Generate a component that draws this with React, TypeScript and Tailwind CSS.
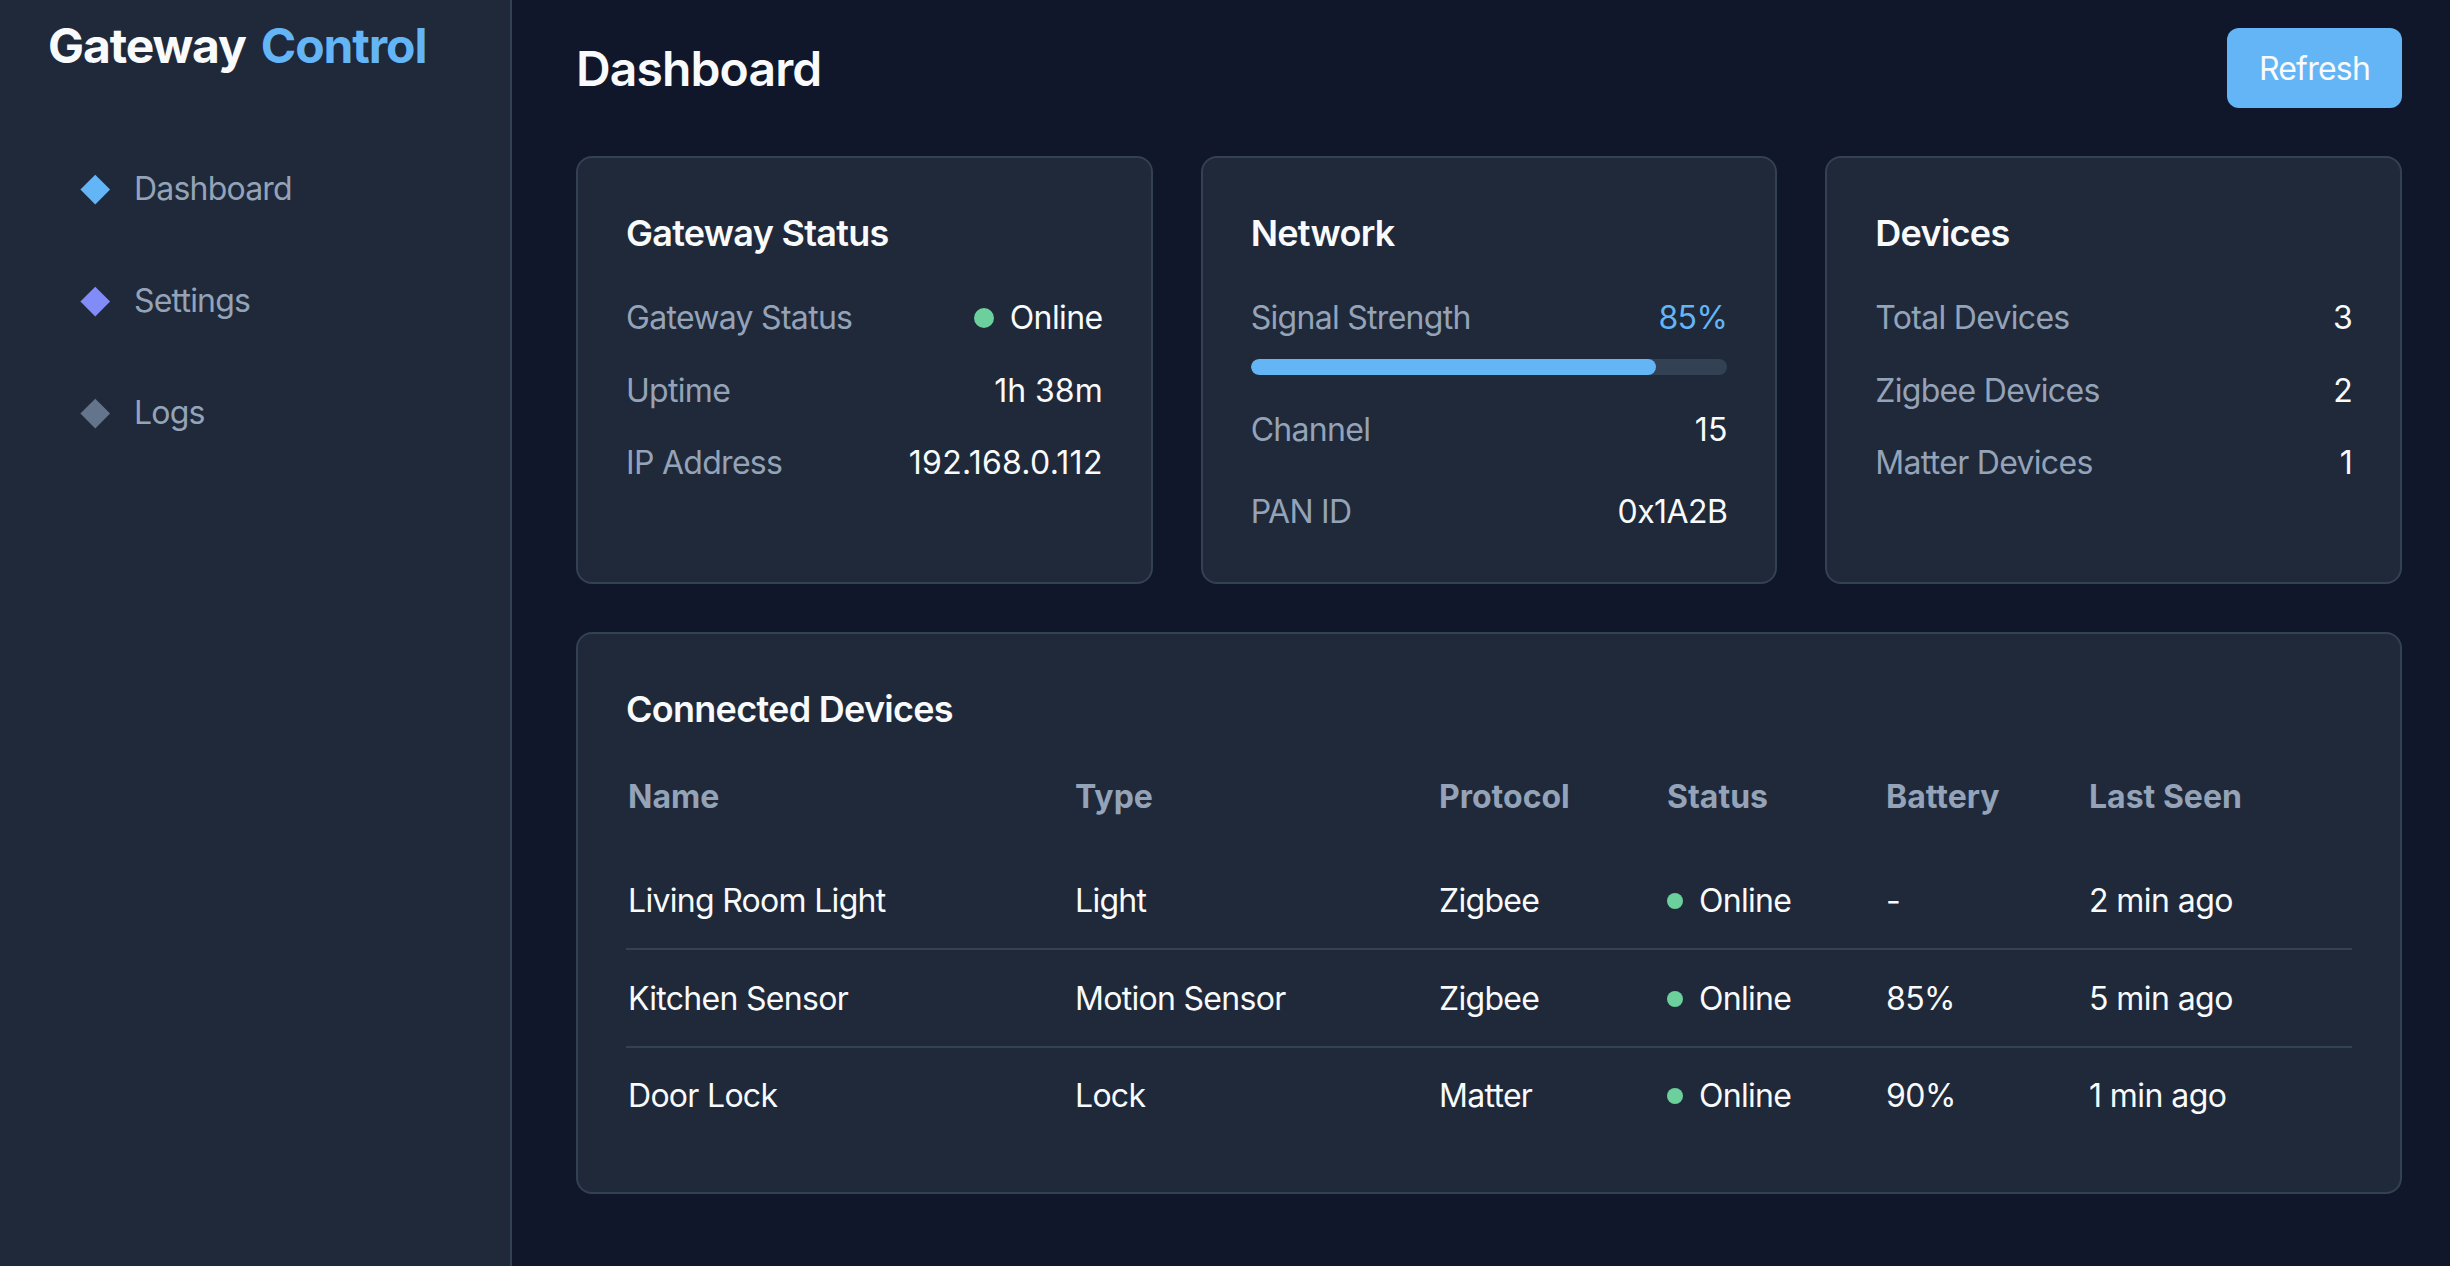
import React from "react";

const Row = ({ label, value, cls = "", valueCls = "" }: { label: string; value: React.ReactNode; cls?: string; valueCls?: string }) => (
  <div className={`flex justify-between items-center h-[44px] ${cls}`}>
    <span className="text-[#94a3b8]">{label}</span>
    <span className={`text-[#f8fafc] ${valueCls}`}>{value}</span>
  </div>
);

const Card = ({ title, children }: { title: string; children: React.ReactNode }) => (
  <div className="rounded-[16px] border-2 border-[#334155] bg-[#1f293a] p-[48px] h-[428px]">
    <h2 className="text-[36px] leading-[54px] font-semibold text-[#f8fafc] mb-[36px] tracking-[-0.02em]">{title}</h2>
    {children}
  </div>
);

const Diamond = ({ cls }: { cls: string }) => (
  <span className={`block w-[20.5px] h-[20.5px] rotate-45 ${cls}`} />
);

const rows = [
  ["Living Room Light", "Light", "Zigbee", "-", "2 min ago"],
  ["Kitchen Sensor", "Motion Sensor", "Zigbee", "85%", "5 min ago"],
  ["Door Lock", "Lock", "Matter", "90%", "1 min ago"],
];

export default function App() {
  return (
    <div className="flex h-[1266px] overflow-hidden bg-[#10172a] text-[32px] tracking-[-0.022em] font-['Inter',sans-serif]">
      <aside className="w-[512px] shrink-0 bg-[#1f293a] border-r-2 border-[#334155]">
        <div className="flex gap-[15px] pl-[48px] pt-[10px] text-[48px] leading-[72px] font-bold tracking-[-0.023em]">
          <span className="text-[#f8fafc]">Gateway</span>
          <span className="text-[#64b5f6]">Control</span>
        </div>
        <nav className="mt-[82px] pl-[85px] flex flex-col gap-[62px] text-[#94a3b8] tracking-[-0.025em]">
          {[["Dashboard", "bg-[#64b5f6]"], ["Settings", "bg-[#818cf8]"], ["Logs", "bg-[#64748b]"]].map(([t, c]) => (
            <div key={t} className="flex items-center gap-[28.5px] h-[50px]">
              <Diamond cls={c} />
              <span>{t}</span>
            </div>
          ))}
        </nav>
      </aside>
      <main className="flex-1 pl-[64px] pr-[48px] pt-[28px]">
        <header className="flex justify-between items-center h-[80px] mb-[48px]">
          <h1 className="text-[48px] font-semibold text-[#f8fafc] pt-[1px] tracking-[-0.018em]">Dashboard</h1>
          <button className="w-[175px] h-[80px] pt-[2px] rounded-[12px] bg-[#64b5f6] text-[#f8fafc] tracking-[-0.024em]">Refresh</button>
        </header>
        <div className="grid grid-cols-3 gap-[48px]">
          <Card title="Gateway Status">
            <div className="flex flex-col gap-[28.5px]">
              <Row label="Gateway Status" value={<span className="flex items-center gap-[16px] tracking-[-0.018em]"><span className="w-[20px] h-[20px] rounded-full bg-[#6bd09b]" />Online</span>} />
              <Row label="Uptime" value="1h 38m" valueCls="tracking-normal" />
              <Row label="IP Address" value="192.168.0.112" valueCls="tracking-[0.008em]" />
            </div>
          </Card>
          <Card title="Network">
            <div className="flex justify-between items-center h-[44px]">
              <span className="text-[#94a3b8]">Signal Strength</span>
              <span className="text-[#64b5f6] tracking-[-0.018em]">85%</span>
            </div>
            <div className="h-[16px] rounded-full bg-[#334155] mt-[19px] mb-[33px] overflow-hidden">
              <div className="h-full w-[85%] rounded-full bg-[#64b5f6]" />
            </div>
            <Row label="Channel" value="15" valueCls="tracking-normal" />
            <Row label="PAN ID" value="0x1A2B" cls="mt-[38px]" valueCls="tracking-[-0.018em]" />
          </Card>
          <Card title="Devices">
            <div className="flex flex-col gap-[28.5px]">
              <Row label="Total Devices" value="3" />
              <Row label="Zigbee Devices" value="2" />
              <Row label="Matter Devices" value="1" />
            </div>
          </Card>
        </div>
        <section className="mt-[48px] h-[562px] rounded-[16px] border-2 border-[#334155] bg-[#1f293a] p-[48px]">
          <h2 className="text-[36px] leading-[54px] font-semibold text-[#f8fafc] mb-[4px] tracking-[-0.02em]">Connected Devices</h2>
          <table className="w-full table-fixed border-collapse text-left">
            <colgroup>
              <col className="w-[447px]" />
              <col className="w-[364px]" />
              <col className="w-[228px]" />
              <col className="w-[219px]" />
              <col className="w-[203px]" />
              <col />
            </colgroup>
            <thead>
              <tr className="h-[111px] text-[#94a3b8]">
                {["Name", "Type", "Protocol", "Status", "Battery", "Last Seen"].map((h) => (
                  <th key={h} className="pl-[2px] pt-[2px] font-bold tracking-normal">{h}</th>
                ))}
              </tr>
            </thead>
            <tbody className="text-[#f8fafc]">
              {rows.map((r, i) => (
                <tr key={r[0]} className={i < 2 ? "h-[98px] border-b-2 border-[#334155]" : "h-[95px]"}>
                  <td className="pl-[2px] pt-[2px]">{r[0]}</td>
                  <td className="pl-[2px] pt-[2px]">{r[1]}</td>
                  <td className="pl-[2px] pt-[2px]">{r[2]}</td>
                  <td className="pl-[2px] pt-[2px]">
                    <span className="flex items-center gap-[16px]">
                      <span className="w-[16px] h-[16px] rounded-full bg-[#6bd09b]" />
                      Online
                    </span>
                  </td>
                  <td className="pl-[2px] pt-[2px] tracking-[-0.018em]">{r[3]}</td>
                  <td className="pl-[2px] pt-[2px] tracking-[-0.018em]">{r[4]}</td>
                </tr>
              ))}
            </tbody>
          </table>
        </section>
      </main>
    </div>
  );
}
